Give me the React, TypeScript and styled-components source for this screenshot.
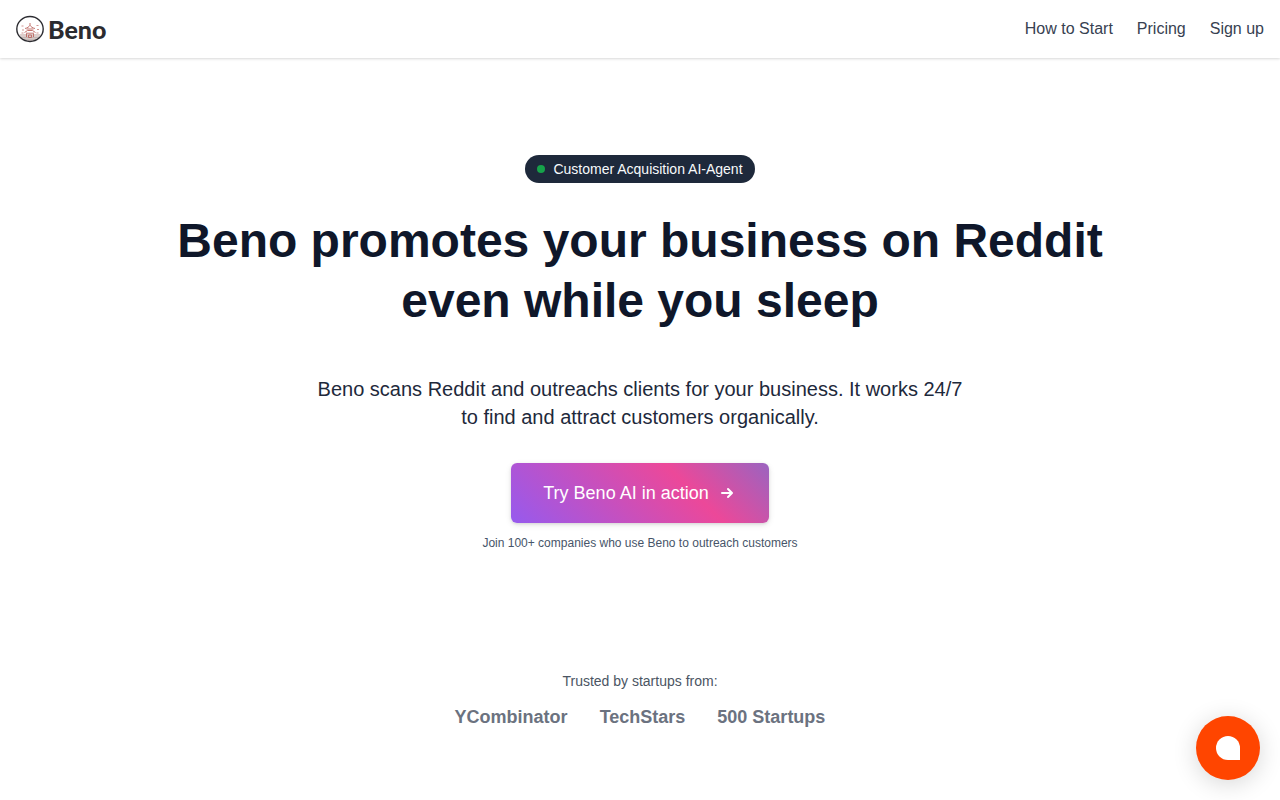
import React from "react";
import styled, { createGlobalStyle } from "styled-components";

const GlobalStyle = createGlobalStyle`
  *, *::before, *::after { box-sizing: border-box; }
  body {
    margin: 0;
    background: #ffffff;
    color: #1e293b;
    font-family: "Liberation Sans", Arial, sans-serif;
  }
  h1, p, ul { margin: 0; padding: 0; }
`;

const Header = styled.header`
  display: flex;
  align-items: center;
  justify-content: space-between;
  height: 58px;
  padding: 0 16px;
  background: #ffffff;
  box-shadow: 0 1px 3px rgba(0, 0, 0, 0.1), 0 1px 2px rgba(0, 0, 0, 0.06);
`;

const Logo = styled.a`
  display: flex;
  align-items: center;
  gap: 4px;
  color: #2b2b2f;
  font-family: Lato, "Liberation Sans", sans-serif;
  font-size: 25px;
  line-height: 28px;
  font-weight: 900;
  text-decoration: none;
`;

const Nav = styled.nav`
  display: flex;
  gap: 24px;
`;

const NavLink = styled.a`
  color: #374151;
  font-size: 16px;
  line-height: 24px;
  text-decoration: none;
`;

const Hero = styled.main`
  display: flex;
  flex-direction: column;
  align-items: center;
  padding: 97px 16px 64px;
  text-align: center;
`;

const Badge = styled.div`
  display: flex;
  align-items: center;
  gap: 8px;
  padding: 4px 12px;
  border-radius: 14px;
  background: #1e293b;
  color: #f8fafc;
  font-size: 14px;
  line-height: 20px;
`;

const StatusDot = styled.span`
  width: 8px;
  height: 8px;
  border-radius: 50%;
  background: #16a34a;
`;

const Title = styled.h1`
  max-width: 1024px;
  margin-top: 28px;
  color: #0f172a;
  font-size: 48px;
  line-height: 60px;
  font-weight: 700;
`;

const Lead = styled.p`
  max-width: 656px;
  margin-top: 44px;
  font-size: 20px;
  line-height: 28px;
`;

const CallToAction = styled.button`
  display: flex;
  align-items: center;
  gap: 8px;
  height: 60px;
  margin-top: 32px;
  padding: 0 32px;
  border: 0;
  border-radius: 6px;
  background: linear-gradient(45deg, #965aee 0%, #ec4899 67%, #9a64c0 100%);
  box-shadow: 0 1px 3px rgba(0, 0, 0, 0.1), 0 2px 6px rgba(0, 0, 0, 0.1);
  color: #ffffff;
  font-family: inherit;
  font-size: 18px;
  line-height: 28px;
  cursor: pointer;
`;

const Note = styled.p`
  margin-top: 12px;
  color: #475569;
  font-size: 12px;
  line-height: 16px;
`;

const Trusted = styled.section`
  display: flex;
  flex-direction: column;
  align-items: center;
  gap: 12px;
  margin-top: 120px;
`;

const TrustedLabel = styled.p`
  color: #4b5563;
  font-size: 14px;
  line-height: 20px;
`;

const Backers = styled.ul`
  display: flex;
  flex-wrap: wrap;
  justify-content: center;
  gap: 32px;
  list-style: none;
`;

const Backer = styled.li`
  color: #6b7280;
  font-size: 18px;
  line-height: 28px;
  font-weight: 700;
`;

const ChatButton = styled.button`
  position: fixed;
  right: 20px;
  bottom: 20px;
  display: grid;
  place-items: center;
  width: 64px;
  height: 64px;
  padding: 0;
  border: 0;
  border-radius: 50%;
  background: #ff4500;
  box-shadow: 0 4px 24px rgba(0, 0, 0, 0.16);
  cursor: pointer;
`;

const ChatBubble = styled.span`
  width: 24px;
  height: 24px;
  border-radius: 12px 12px 0 12px;
  background: #ffffff;
`;

const LogoMark = () => (
  <svg width="28" height="28" viewBox="0 0 28 28" fill="none" aria-hidden="true">
    <ellipse cx="14" cy="14" rx="13.2" ry="12.5" fill="#fff" />
    <path d="M3.3 19h21.400c-2.300 4.700-6.100 7-10.700 7s-8.400-2.300-10.700-7Z" fill="#dccdcb" />
    <path d="M5 22.500h18M8 24.300h12" stroke="#b6aaa9" strokeWidth=".7" />
    <g stroke="#bd6660" strokeWidth="1" opacity=".9">
      <path d="M14 8v2.500M9 13.500c2.400-.5 4-1.600 5-3.200 1 1.600 2.600 2.700 5 3.200M10.500 14h7M8.500 17.500l3-2h5l3 2M10 18.200h8M10.500 18.500V22M17.500 18.500V22M12.500 20h3v2.500h-3z" />
      <path d="M5.500 11h2M6 15h2M5.500 18h2M20.500 10.500h2M21 14.500h2M20.500 18h2" strokeWidth="1.200" opacity=".75" />
    </g>
    <ellipse cx="14" cy="14" rx="13.200" ry="12.500" stroke="#2d2d32" strokeWidth="1.400" />
  </svg>
);

const ArrowIcon = () => (
  <svg width="20" height="20" viewBox="0 0 20 20" fill="currentColor" aria-hidden="true">
    <path
      fillRule="evenodd"
      d="M10.293 5.293a1 1 0 011.414 0l4 4a1 1 0 010 1.414l-4 4a1 1 0 01-1.414-1.414L12.586 11H5a1 1 0 110-2h7.586l-2.293-2.293a1 1 0 010-1.414z"
      clipRule="evenodd"
    />
  </svg>
);

const links = ["How to Start", "Pricing", "Sign up"];
const backers = ["YCombinator", "TechStars", "500 Startups"];

export default function App() {
  return (
    <>
      <GlobalStyle />
      <Header>
        <Logo href="#">
          <LogoMark />
          Beno
        </Logo>
        <Nav>
          {links.map((label) => (
            <NavLink key={label} href="#">{label}</NavLink>
          ))}
        </Nav>
      </Header>
      <Hero>
        <Badge>
          <StatusDot />
          Customer Acquisition AI-Agent
        </Badge>
        <Title>
          Beno promotes your business on Reddit
          <br />
          even while you sleep
        </Title>
        <Lead>
          Beno scans Reddit and outreachs clients for your business. It works 24/7 to find and
          attract customers organically.
        </Lead>
        <CallToAction type="button">
          Try Beno AI in action
          <ArrowIcon />
        </CallToAction>
        <Note>Join 100+ companies who use Beno to outreach customers</Note>
        <Trusted>
          <TrustedLabel>Trusted by startups from:</TrustedLabel>
          <Backers>
            {backers.map((name) => (
              <Backer key={name}>{name}</Backer>
            ))}
          </Backers>
        </Trusted>
      </Hero>
      <ChatButton type="button" aria-label="Open chat">
        <ChatBubble />
      </ChatButton>
    </>
  );
}
